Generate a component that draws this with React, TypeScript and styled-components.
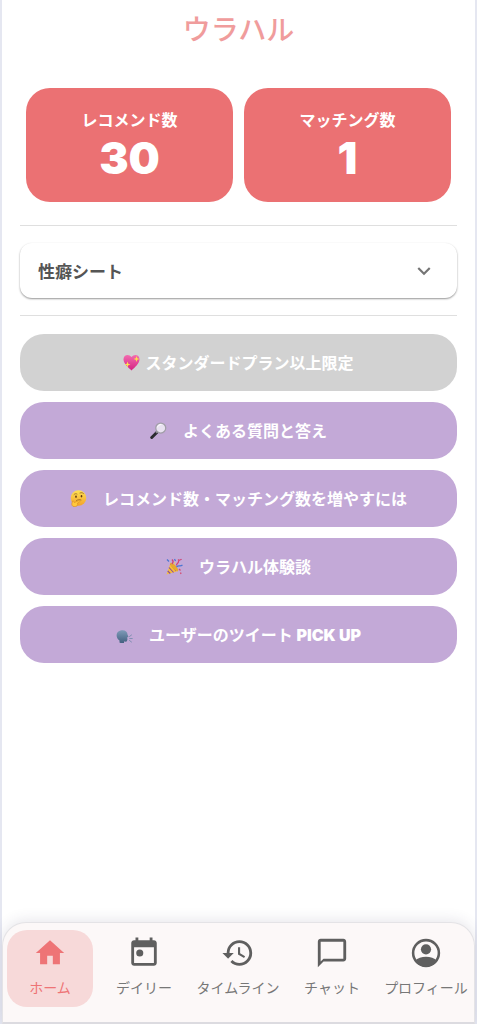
import React, { useState } from "react";
import styled, { createGlobalStyle } from "styled-components";
import { MdChatBubbleOutline, MdExpandMore, MdHistory, MdHome } from "react-icons/md";

const GlobalStyle = createGlobalStyle`
  * { box-sizing: border-box; }
  body {
    margin: 0;
    background: #fff;
    font-family: Inter, "Noto Sans CJK JP", sans-serif;
  }
  button { font: inherit; border: 0; cursor: pointer; }
`;

const Page = styled.div`
  display: flex;
  flex-direction: column;
  min-height: 100vh;
  border: solid #e5e7f1;
  border-width: 0 2px;
`;

const Header = styled.header`
  display: flex;
  justify-content: center;
  align-items: center;
  height: 60px;
`;

const Logo = styled.h1`
  margin: 0;
  color: #f09c9c;
  font-size: 28px;
  font-weight: 500;
  line-height: 40px;
`;

const Main = styled.main`
  flex: 1;
  padding: 28px 18px 24px;
`;

const Stats = styled.section`
  display: grid;
  grid-template-columns: 1fr 1fr;
  gap: 11px;
  padding: 0 6px;
`;

const StatCard = styled.div`
  display: flex;
  flex-direction: column;
  align-items: center;
  padding: 22px 8px 16px;
  border-radius: 24px;
  background: #eb7173;
  color: #fff;
`;

const StatLabel = styled.span`
  font-size: 16px;
  font-weight: 700;
  line-height: 20px;
`;

const StatValue = styled.span`
  font-size: 44px;
  font-weight: 900;
  line-height: 56px;
`;

const Divider = styled.hr`
  height: 1px;
  margin: 0;
  border: 0;
  background: #dfdfdf;
`;

const SheetSection = styled.section`
  display: flex;
  flex-direction: column;
  gap: 17px;
  margin: 23px 0 18px;
`;

const SheetToggle = styled.button`
  display: flex;
  justify-content: space-between;
  align-items: center;
  height: 55px;
  padding: 0 20px 0 18px;
  border-radius: 12px;
  background: #fff;
  box-shadow: 0 1px 2px rgba(0, 0, 0, 0.42);
  color: #555;
  font-size: 17px;
  font-weight: 700;
`;

const Menu = styled.nav`
  display: flex;
  flex-direction: column;
  gap: 11px;
`;

const MenuButton = styled.button<{ $tight?: boolean }>`
  display: flex;
  justify-content: center;
  align-items: center;
  gap: ${({ $tight }) => ($tight ? 5 : 16)}px;
  min-height: 57px;
  padding: 0 12px;
  border-radius: 24px;
  background: ${({ disabled }) => (disabled ? "#d2d2d2" : "#c3a9d7")};
  color: #fff;
  font-size: 16px;
  font-weight: 700;
  line-height: 24px;
`;

const Latin = styled.span`
  font-weight: 900;
`;

const Emoji = styled.svg`
  flex: none;
  width: 17px;
  height: 17px;
`;

const TabBar = styled.nav`
  position: sticky;
  bottom: 0;
  display: grid;
  grid-template-columns: repeat(5, minmax(0, 1fr));
  height: 102px;
  padding: 7px 1px 15px 0;
  border: 1px solid #e4e3e6;
  border-bottom: 2px solid #dcdbe0;
  border-radius: 24px 24px 0 0;
  background: #fcf8f8;
  box-shadow: 0 -2px 14px rgba(60, 50, 90, 0.12);
`;

const Tab = styled.a<{ $active?: boolean }>`
  display: flex;
  flex-direction: column;
  align-items: center;
  gap: 6px;
  margin: 0 4px;
  padding-top: 6px;
  border-radius: 20px;
  background: ${({ $active }) => ($active ? "#f7d9d9" : "transparent")};
  color: ${({ $active }) => ($active ? "#ee7476" : "#5f5f5f")};
  text-decoration: none;
`;

const TabLabel = styled.span<{ $active?: boolean }>`
  color: ${({ $active }) => ($active ? "#ee7476" : "#777")};
  font-size: 14px;
  line-height: 24px;
  white-space: nowrap;
`;

const CalendarIcon = () => (
  <svg width="34" height="34" viewBox="0 0 24 24" fill="currentColor" aria-hidden="true">
    <path d="M19 3h-1V1h-2v2H8V1H6v2H5c-1.11 0-1.99.9-1.99 2L3 19c0 1.1.89 2 2 2h14c1.1 0 2-.9 2-2V5c0-1.1-.9-2-2-2zm0 16H5V8h14v11z" />
    <circle cx="9" cy="12" r="2.5" />
  </svg>
);

const AccountIcon = () => (
  <svg width="34" height="34" viewBox="0 0 24 24" aria-hidden="true">
    <circle cx="12" cy="12" r="9.1" fill="none" stroke="currentColor" strokeWidth="1.8" />
    <circle cx="12" cy="9.4" r="3.6" fill="currentColor" />
    <path d="M4.2 17.4C6 15.6 9 14.7 12 14.7s6 .9 7.8 2.7C18 20.2 15.2 21.8 12 21.8S6 20.2 4.2 17.4z" fill="currentColor" />
  </svg>
);

const HeartEmoji = () => (
  <Emoji viewBox="0 0 34 34" aria-hidden="true">
    <defs>
      <linearGradient id="heart" x1="0" y1="0" x2="0" y2="1">
        <stop offset="0" stopColor="#f36cb0" />
        <stop offset="1" stopColor="#d42282" />
      </linearGradient>
    </defs>
    <path d="M17 33C11 27 1 20 1 10.500C1 1 12-1 17 6C22-1 33 1 33 10.500C33 20 23 27 17 33z" fill="url(#heart)" />
    <path d="M9 15l1.500 4.500 4.500 1.500-4.500 1.500L9 27l-1.500-4.500L3 21l4.500-1.500zM27 4l1.500 4.500 4.500 1.500-4.500 1.500L27 16l-1.500-4.500L21 10l4.500-1.500z" fill="#ffe14d" />
  </Emoji>
);

const MagnifierEmoji = () => (
  <Emoji viewBox="0 0 34 34" aria-hidden="true">
    <path d="M3.500 31L15 19.500" stroke="#2b2b30" strokeWidth="6" strokeLinecap="round" />
    <path d="M12 21.500l4-4" stroke="#8b8b92" strokeWidth="4" />
    <circle cx="21.500" cy="12" r="10" fill="#e9e2f1" stroke="#a19ea8" strokeWidth="2.500" />
    <path d="M15 10c1-3 4-5 7-5" fill="none" stroke="#fff" strokeWidth="2" strokeLinecap="round" />
  </Emoji>
);

const ThinkingEmoji = () => (
  <Emoji viewBox="0 0 34 34" aria-hidden="true">
    <defs>
      <linearGradient id="face" x1="0" y1="0" x2="0" y2="1">
        <stop offset="0" stopColor="#ffe254" />
        <stop offset="1" stopColor="#f2a32b" />
      </linearGradient>
    </defs>
    <circle cx="17" cy="16" r="15.500" fill="url(#face)" />
    <path d="M8 9c2-2 4-2 6-1M20 6c3-1 5-1 7 1" fill="none" stroke="#8f601f" strokeWidth="1.500" strokeLinecap="round" />
    <ellipse cx="12" cy="13.500" rx="1.700" ry="2.300" fill="#5b3510" />
    <ellipse cx="23" cy="12.500" rx="1.700" ry="2.300" fill="#5b3510" />
    <path d="M13 21c3-2 6-2 9-1" fill="none" stroke="#8f601f" strokeWidth="1.500" strokeLinecap="round" />
    <path d="M5 22c2-1 3 1 3.500 3l9-3.500c2-.5 3 2 1 3l-4 2c2 1 1 6-3 6.500-5 1-8-1-8-5z" fill="#ffc83d" stroke="#d98a20" strokeWidth="1.200" />
  </Emoji>
);

const PartyEmoji = () => (
  <Emoji viewBox="0 0 34 34" aria-hidden="true">
    <path d="M1 33L9 10c6 2 13 9 15 16z" fill="#f5bd3c" />
    <path d="M6 19l9 10M3.500 26l5 5M9 12l11 14" stroke="#8a4c9b" strokeWidth="2.200" />
    <ellipse cx="16.500" cy="18" rx="4" ry="11" transform="rotate(-43 16.500 18)" fill="#e8a92e" />
    <path d="M12 12c3-3 2-7 0-9M21 15c0-5 4-4 4-8s4-2 6-5" fill="none" stroke="#cf4576" strokeWidth="2.500" />
    <path d="M21 18c4-5 7 0 12-4M2 3l4 4M17 2l2 4" fill="none" stroke="#4b75d2" strokeWidth="2.500" />
    <path d="M26 22l3 3M29 29l1 3M24 3l2 2" stroke="#d54b71" strokeWidth="2.500" />
    <circle cx="17" cy="10" r="1.500" fill="#f5d04a" />
  </Emoji>
);

const SpeakingEmoji = () => (
  <Emoji viewBox="0 0 34 34" aria-hidden="true">
    <defs>
      <linearGradient id="speaker" x1="0" y1="0" x2="0" y2="1">
        <stop offset="0" stopColor="#7f9bb8" />
        <stop offset="1" stopColor="#425f7f" />
      </linearGradient>
    </defs>
    <path d="M7 29C-1 24-1 11 9 9c8-2 14 2 14 8l2 5-3 1 1 3-1 4c-1 2-4 1-6 1v3c-3 1-8 0-9-1z" fill="url(#speaker)" />
    <path d="M27 21l4-3M27.500 25h5M27 29l4 3" stroke="#7088a8" strokeWidth="1.600" strokeLinecap="round" />
  </Emoji>
);

const stats = [
  { label: "レコメンド数", value: 30 },
  { label: "マッチング数", value: 1 },
];

const links = [
  { icon: <MagnifierEmoji />, label: "よくある質問と答え" },
  { icon: <ThinkingEmoji />, label: "レコメンド数・マッチング数を増やすには" },
  { icon: <PartyEmoji />, label: "ウラハル体験談" },
  { icon: <SpeakingEmoji />, label: "ユーザーのツイート ", latin: "PICK UP" },
];

const tabs = [
  { icon: <MdHome size={34} />, label: "ホーム" },
  { icon: <CalendarIcon />, label: "デイリー" },
  { icon: <MdHistory size={34} />, label: "タイムライン" },
  { icon: <MdChatBubbleOutline size={34} />, label: "チャット" },
  { icon: <AccountIcon />, label: "プロフィール" },
];

export default function App() {
  const [open, setOpen] = useState(false);
  return (
    <Page lang="ja">
      <GlobalStyle />
      <Header>
        <Logo>ウラハル</Logo>
      </Header>
      <Main>
        <Stats>
          {stats.map((stat) => (
            <StatCard key={stat.label}>
              <StatLabel>{stat.label}</StatLabel>
              <StatValue>{stat.value}</StatValue>
            </StatCard>
          ))}
        </Stats>
        <SheetSection>
          <Divider />
          <SheetToggle type="button" aria-expanded={open} onClick={() => setOpen(!open)}>
            性癖シート
            <MdExpandMore size={26} color="#757575" />
          </SheetToggle>
          <Divider />
        </SheetSection>
        <Menu>
          <MenuButton type="button" disabled $tight>
            <HeartEmoji />
            スタンダードプラン以上限定
          </MenuButton>
          {links.map(({ icon, label, latin }) => (
            <MenuButton type="button" key={label}>
              {icon}
              <span>
                {label}
                {latin && <Latin>{latin}</Latin>}
              </span>
            </MenuButton>
          ))}
        </Menu>
      </Main>
      <TabBar>
        {tabs.map(({ icon, label }, index) => (
          <Tab href="#" key={label} $active={index === 0} aria-current={index === 0 ? "page" : undefined}>
            {icon}
            <TabLabel $active={index === 0}>{label}</TabLabel>
          </Tab>
        ))}
      </TabBar>
    </Page>
  );
}
